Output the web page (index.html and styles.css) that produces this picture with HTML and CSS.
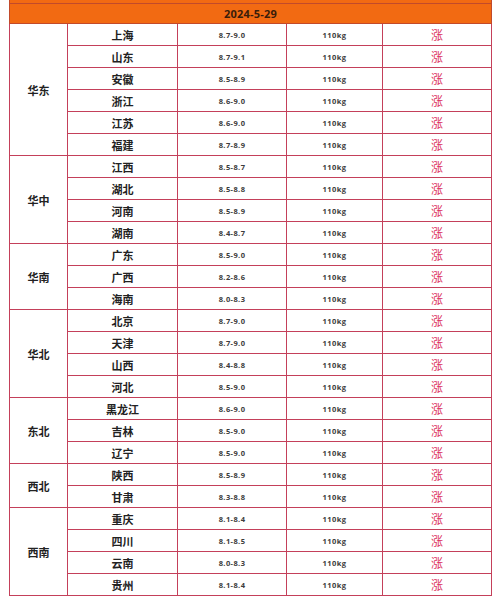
FILE: index.html
```html
<!DOCTYPE html>
<html lang="zh">
<head>
<meta charset="utf-8">
<link rel="stylesheet" href="styles.css">
</head>
<body>
<div class="wrap">
<table class="price">
<colgroup><col class="c1"><col class="c2"><col class="c3"><col class="c4"><col class="c5"></colgroup>
<tr class="cut"><td colspan="5"></td></tr>
<tr class="date"><td colspan="5">2024-5-29</td></tr>
<tr><td class="reg" rowspan="6">华东</td><td class="prov">上海</td><td class="num">8.7-9.0</td><td class="wt">110kg</td><td class="up">涨</td></tr>
<tr><td class="prov">山东</td><td class="num">8.7-9.1</td><td class="wt">110kg</td><td class="up">涨</td></tr>
<tr><td class="prov">安徽</td><td class="num">8.5-8.9</td><td class="wt">110kg</td><td class="up">涨</td></tr>
<tr><td class="prov">浙江</td><td class="num">8.6-9.0</td><td class="wt">110kg</td><td class="up">涨</td></tr>
<tr><td class="prov">江苏</td><td class="num">8.6-9.0</td><td class="wt">110kg</td><td class="up">涨</td></tr>
<tr><td class="prov">福建</td><td class="num">8.7-8.9</td><td class="wt">110kg</td><td class="up">涨</td></tr>
<tr><td class="reg" rowspan="4">华中</td><td class="prov">江西</td><td class="num">8.5-8.7</td><td class="wt">110kg</td><td class="up">涨</td></tr>
<tr><td class="prov">湖北</td><td class="num">8.5-8.8</td><td class="wt">110kg</td><td class="up">涨</td></tr>
<tr><td class="prov">河南</td><td class="num">8.5-8.9</td><td class="wt">110kg</td><td class="up">涨</td></tr>
<tr><td class="prov">湖南</td><td class="num">8.4-8.7</td><td class="wt">110kg</td><td class="up">涨</td></tr>
<tr><td class="reg" rowspan="3">华南</td><td class="prov">广东</td><td class="num">8.5-9.0</td><td class="wt">110kg</td><td class="up">涨</td></tr>
<tr><td class="prov">广西</td><td class="num">8.2-8.6</td><td class="wt">110kg</td><td class="up">涨</td></tr>
<tr><td class="prov">海南</td><td class="num">8.0-8.3</td><td class="wt">110kg</td><td class="up">涨</td></tr>
<tr><td class="reg" rowspan="4">华北</td><td class="prov">北京</td><td class="num">8.7-9.0</td><td class="wt">110kg</td><td class="up">涨</td></tr>
<tr><td class="prov">天津</td><td class="num">8.7-9.0</td><td class="wt">110kg</td><td class="up">涨</td></tr>
<tr><td class="prov">山西</td><td class="num">8.4-8.8</td><td class="wt">110kg</td><td class="up">涨</td></tr>
<tr><td class="prov">河北</td><td class="num">8.5-9.0</td><td class="wt">110kg</td><td class="up">涨</td></tr>
<tr><td class="reg" rowspan="3">东北</td><td class="prov">黑龙江</td><td class="num">8.6-9.0</td><td class="wt">110kg</td><td class="up">涨</td></tr>
<tr><td class="prov">吉林</td><td class="num">8.5-9.0</td><td class="wt">110kg</td><td class="up">涨</td></tr>
<tr><td class="prov">辽宁</td><td class="num">8.5-9.0</td><td class="wt">110kg</td><td class="up">涨</td></tr>
<tr><td class="reg" rowspan="2">西北</td><td class="prov">陕西</td><td class="num">8.5-8.9</td><td class="wt">110kg</td><td class="up">涨</td></tr>
<tr><td class="prov">甘肃</td><td class="num">8.3-8.8</td><td class="wt">110kg</td><td class="up">涨</td></tr>
<tr><td class="reg" rowspan="4">西南</td><td class="prov">重庆</td><td class="num">8.1-8.4</td><td class="wt">110kg</td><td class="up">涨</td></tr>
<tr><td class="prov">四川</td><td class="num">8.1-8.5</td><td class="wt">110kg</td><td class="up">涨</td></tr>
<tr><td class="prov">云南</td><td class="num">8.0-8.3</td><td class="wt">110kg</td><td class="up">涨</td></tr>
<tr><td class="prov">贵州</td><td class="num">8.1-8.4</td><td class="wt">110kg</td><td class="up">涨</td></tr>
</table>
</div>
</body>
</html>
```
FILE: styles.css
```css
html, body {
  margin: 0;
  padding: 0;
  background: #ffffff;
}
.wrap {
  padding: 0 0 0 9px;
}
.price {
  border-collapse: collapse;
  table-layout: fixed;
  width: 482px;
  font-family: "Noto Sans CJK SC", "Open Sans", sans-serif;
  color: #222;
}
.c1 { width: 58px; }
.c2 { width: 110px; }
.c3 { width: 109px; }
.c4 { width: 96px; }
.c5 { width: 109px; }
.price td {
  border: 1px solid #c4405a;
  padding: 0;
  height: 21px;
  text-align: center;
  vertical-align: middle;
  line-height: 14px;
}
.price tr.cut td {
  height: 3px;
  border-top: none;
  background: #f26a12;
  border-color: #c24a2a;
}
.price tr.date td {
  height: 19px;
  background: #f26a12;
  border-color: #c24a2a;
  font-family: "Open Sans", sans-serif;
  font-weight: 700;
  font-size: 11px;
  color: #3a1d0a;
  letter-spacing: 0.2px;
}
.reg, .prov {
  font-weight: 700;
  font-size: 11px;
}
.num, .wt {
  font-family: "Open Sans", sans-serif;
  font-weight: 700;
  font-size: 7.5px;
  color: #3c3c3c;
  letter-spacing: 0.4px;
}
.up {
  font-size: 12px;
  color: #dc3560;
}
```
